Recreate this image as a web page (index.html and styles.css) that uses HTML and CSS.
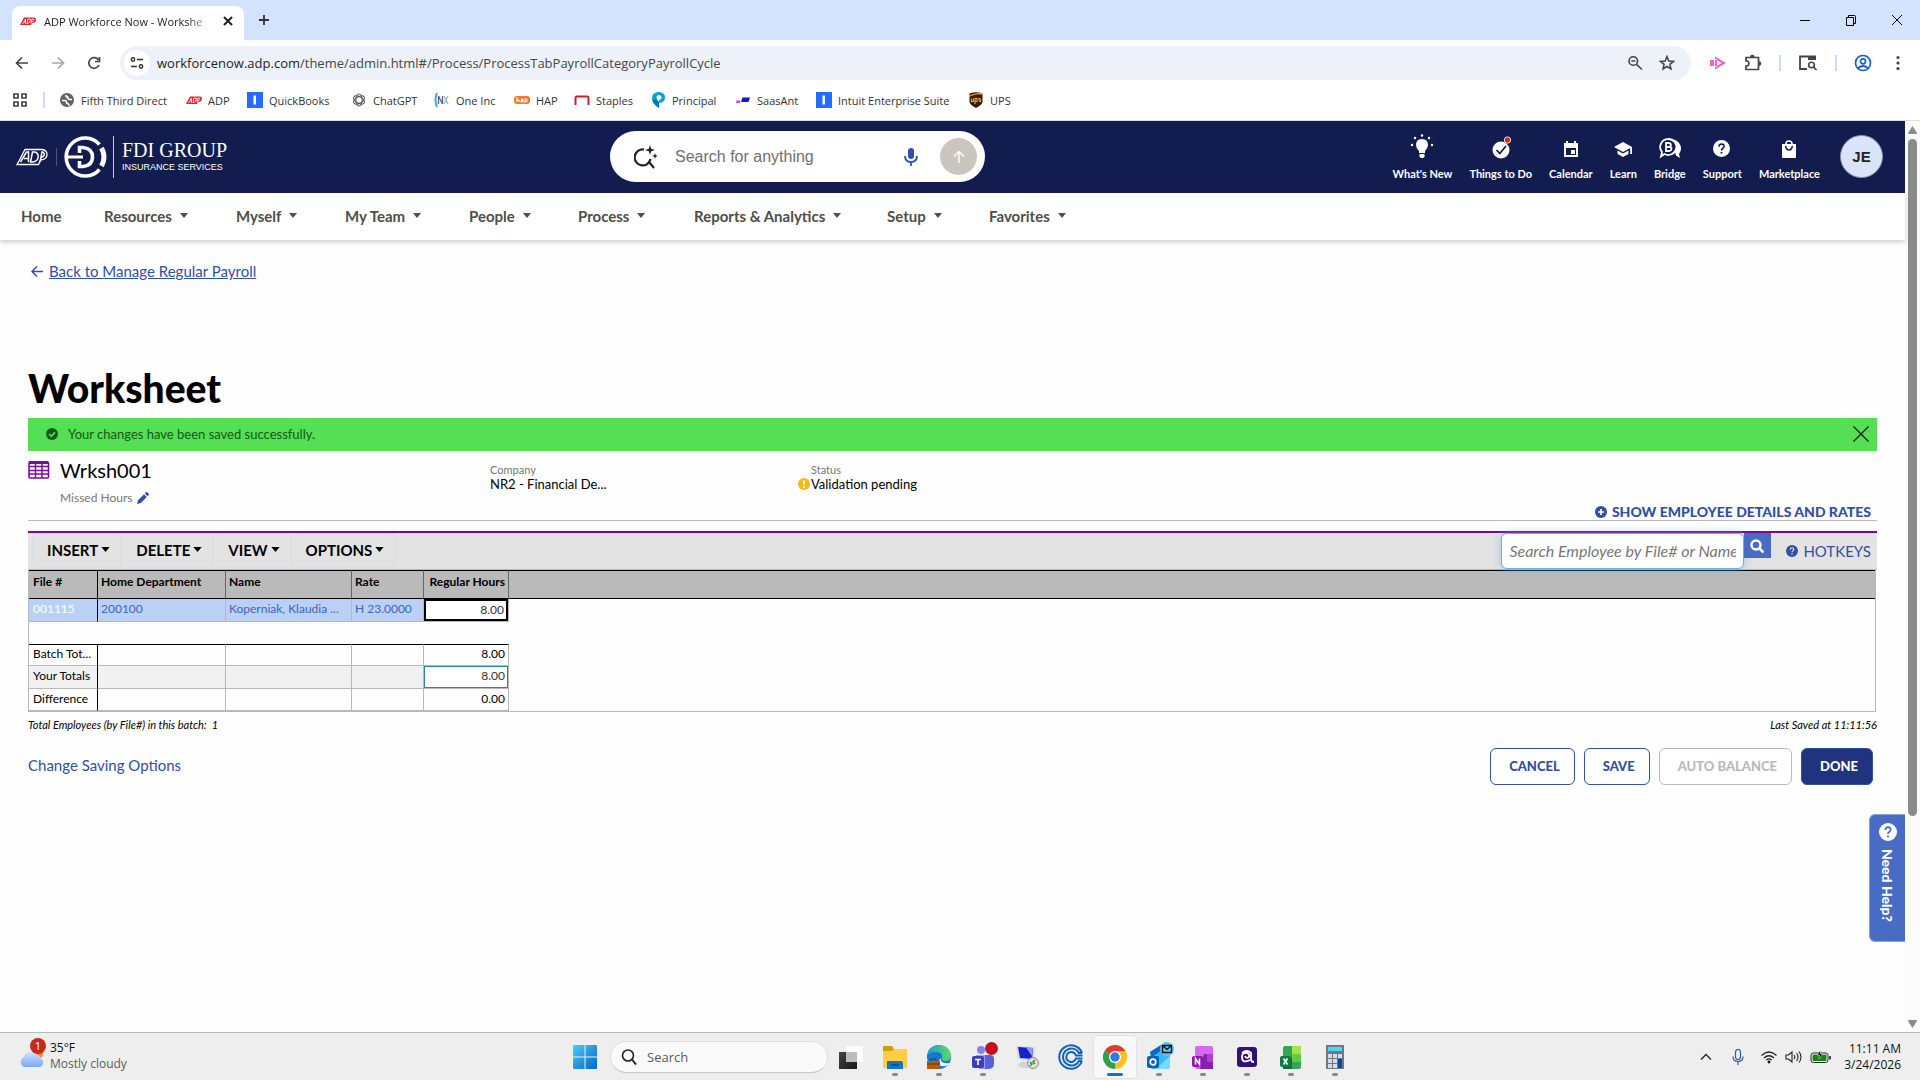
FILE: index.html
```html
<!DOCTYPE html>
<html lang="en">
<head>
<meta charset="utf-8">
<title>ADP Workforce Now - Worksheet</title>
<link rel="stylesheet" href="styles.css">
</head>
<body>
<svg class="defs" aria-hidden="true">
  <symbol id="adp-red" viewBox="0 0 16 16"><path d="M4 4.500h10.500q1.500.5 1.500 2.500 0 3-4 3l-1 2H0l1-2z" fill="#d9232e"/><path d="M2.500 11 5.500 6v5M4 9h1.500M7.800 6 7 10.500h1Q10.500 10 10.500 6H7.800M12 6l-1 4.500M12 6h1.500q1 1.500-.5 2.500h-1.200" fill="none" stroke="#fff" stroke-width=".8"/></symbol>
  <symbol id="intuit" viewBox="0 0 16 16"><path d="M0 0h16v16H0z" fill="#236cff"/><path d="M6.500 3.500h2.500v9H6.500z" fill="#fff"/></symbol>
  <symbol id="mic" viewBox="0 0 16 20"><rect x="5" y="1" width="6" height="11" rx="3" fill="currentColor"/><path d="M2 9q0 6 6 6t6-6M8 15v4" fill="none" stroke="currentColor" stroke-width="1.800"/></symbol>
  <symbol id="caret" viewBox="0 0 10 6"><path d="M0 0h10L5 6z" fill="currentColor"/></symbol>
  <symbol id="help" viewBox="0 0 18 18"><circle cx="9" cy="9" r="9" fill="currentColor"/><path d="M6.300 7q.2-2.800 2.800-2.800 2.600.1 2.600 2.400 0 1.200-1.300 2.100Q9 9.600 9 11" fill="none" stroke="var(--mark)" stroke-width="1.700"/><circle cx="9" cy="13.500" r="1.100" fill="var(--mark)"/></symbol>
</svg>

<header class="browser">
  <div class="tabstrip">
    <div class="tab">
      <svg width="16" height="16"><use href="#adp-red"/></svg>
      <span class="tab-title">ADP Workforce Now - Workshe</span>
      <button class="plain" aria-label="Close tab"><svg width="10" height="10" viewBox="0 0 10 10"><path d="M1 1l8 8M9 1 1 9" stroke="#202124" stroke-width="2"/></svg></button>
    </div>
    <button class="plain new-tab" aria-label="New tab"><svg width="12" height="12" viewBox="0 0 12 12"><path d="M6 1v10M1 6h10" stroke="#333" stroke-width="1.800"/></svg></button>
    <div class="window-buttons">
      <button class="plain" aria-label="Minimize"><svg width="12" height="12" viewBox="0 0 12 12"><path d="M1 6.500h10" stroke="#000"/></svg></button>
      <button class="plain" aria-label="Restore"><svg width="12" height="12" viewBox="0 0 12 12"><path d="M1.500 3.500h7v8h-7zM3.500 3V1.500h6q1 0 1 1v7H9" fill="none" stroke="#000"/></svg></button>
      <button class="plain" aria-label="Close"><svg width="12" height="12" viewBox="0 0 12 12"><path d="M1 1l10 10M11 1 1 11" stroke="#000"/></svg></button>
    </div>
  </div>
  <div class="addressbar">
    <div class="history">
      <button class="plain" aria-label="Back"><svg width="14" height="14" viewBox="0 0 14 14"><path d="M13 7H2M7 1.500 1.500 7 7 12.500" fill="none" stroke="#444" stroke-width="1.700"/></svg></button>
      <button class="plain" aria-label="Forward"><svg width="14" height="14" viewBox="0 0 14 14"><path d="M1 7h11M7 1.500 12.500 7 7 12.500" fill="none" stroke="#aaa" stroke-width="1.700"/></svg></button>
      <button class="plain" aria-label="Reload"><svg width="14" height="14" viewBox="0 0 14 14"><path d="M12 9A5.300 5.300 0 1 1 11.500 4M12.500 1v4.500H8" fill="none" stroke="#444" stroke-width="1.700"/></svg></button>
    </div>
    <div class="omnibox">
      <button class="plain site-info" aria-label="Site information"><svg width="14" height="14" viewBox="0 0 14 14"><path d="M7 3.500h6M1 10.500h6" stroke="#333" stroke-width="1.600"/><circle cx="3" cy="3.500" r="1.700" fill="none" stroke="#333" stroke-width="1.400"/><circle cx="11" cy="10.500" r="1.700" fill="none" stroke="#333" stroke-width="1.400"/></svg></button>
      <div class="url"><b>workforcenow.adp.com</b>/theme/admin.html#/Process/ProcessTabPayrollCategoryPayrollCycle</div>
      <button class="plain" aria-label="Zoom"><svg width="16" height="16" viewBox="0 0 16 16"><circle cx="6.300" cy="6" r="4.300" fill="none" stroke="#444" stroke-width="1.600"/><path d="M9.500 9.300 15 14.500M4.300 6h4" stroke="#444" stroke-width="1.600"/></svg></button>
      <button class="plain" aria-label="Bookmark"><svg width="16" height="16" viewBox="0 0 16 16"><path d="M8 1.500 9.800 6l4.700.4-3.600 3 1.100 4.600-4-2.500L4 14l1.100-4.600-3.600-3L6.200 6z" fill="none" stroke="#444" stroke-width="1.500"/></svg></button>
    </div>
    <div class="extensions">
      <svg width="18" height="16" viewBox="0 0 18 16"><path d="M1 5h4v6H1zM6 1.500 17 8 6 14.500z" fill="#ff5ec4"/><path d="M8 5v6l4.500-3zM6 4v1h1.500V4zM6 11v1h1.500v-1z" fill="#fff"/></svg>
      <svg width="18" height="18" viewBox="0 0 18 18"><path d="M2 3.500h12.500v12H2v-3.500h1q2-.5 2-2.500t-2-2.500H2z" fill="none" stroke="#444" stroke-width="1.700"/><path d="M6 3a2.300 2.300 0 0 1 4.600 0M15 7.200a2.300 2.300 0 0 1 0 4.600" fill="#444"/></svg>
      <i class="bar"></i>
      <svg width="20" height="18" viewBox="0 0 20 18"><path d="M9 15H2V2.500h15V6" fill="none" stroke="#444" stroke-width="1.800"/><path d="M10 2h8v4h-8z" fill="#444"/><circle cx="13.500" cy="11" r="2.800" fill="none" stroke="#444" stroke-width="1.600"/><path d="m15.500 13 3 3" stroke="#444" stroke-width="1.700"/></svg>
      <i class="bar"></i>
      <svg width="18" height="18" viewBox="0 0 18 18"><g fill="none" stroke="#1660d6" stroke-width="1.700"><circle cx="9" cy="9" r="7.500"/><circle cx="9" cy="7.300" r="2.500"/><path d="M4 14q5-4 10 0"/></g></svg>
      <svg width="18" height="18" viewBox="0 0 18 18"><g fill="#444"><circle cx="9" cy="3.500" r="1.600"/><circle cx="9" cy="9" r="1.600"/><circle cx="9" cy="14.500" r="1.600"/></g></svg>
    </div>
  </div>
  <nav class="bookmarks" aria-label="Bookmarks">
    <svg width="14" height="14" viewBox="0 0 14 14"><path d="M1 1h4v4H1zM9 1h4v4H9zM1 9h4v4H1zM9 9h4v4H9z" fill="none" stroke="#444" stroke-width="1.700"/></svg>
    <i class="bar"></i>
    <a href="#"><svg width="16" height="16" viewBox="0 0 16 16"><circle cx="8" cy="8" r="7" fill="#5f6368"/><path d="M3 8.500h3q1.500.2 1.500 1.700t1.500 1.500q1 .3 1 2M13 7.500h-2.500Q9 7.300 9 6T7.300 4.700L7 3" fill="none" stroke="#fff" stroke-width="1.700"/></svg>Fifth Third Direct</a>
    <a href="#"><svg width="16" height="16"><use href="#adp-red"/></svg>ADP</a>
    <a href="#"><svg width="16" height="16"><use href="#intuit"/></svg>QuickBooks</a>
    <a href="#"><svg width="16" height="16" viewBox="0 0 16 16"><g fill="none" stroke="#555" stroke-width="1.100"><ellipse cx="8" cy="8" rx="3.200" ry="6"/><ellipse cx="8" cy="8" rx="3.200" ry="6" transform="rotate(60 8 8)"/><ellipse cx="8" cy="8" rx="3.200" ry="6" transform="rotate(120 8 8)"/></g></svg>ChatGPT</a>
    <a href="#"><svg width="16" height="16" viewBox="0 0 16 16"><path d="M3 1Q0 8 3 15" fill="none" stroke="#49a3dc" stroke-width="2"/><path d="M4.500 12V4l4 8V4" fill="none" stroke="#52647c" stroke-width="1.300"/><path d="m10 4 4 8m0-8-4 8" stroke="#8db7d6" stroke-width="1.300"/></svg>One Inc</a>
    <a href="#"><svg width="16" height="16" viewBox="0 0 16 16"><rect y="4" width="16" height="8" rx="3" fill="#ef7c28"/><path d="M3 5v5m0-2h2v2M7 7h2v3H7V8.500h2M11 11V7h2v2.500h-2" fill="none" stroke="#fff"/></svg>HAP</a>
    <a href="#"><svg width="16" height="16" viewBox="0 0 16 16"><path d="M1.500 13V6q0-1.500 1.500-1.500h10q1.500 0 1.500 1.500v7" fill="none" stroke="#cc1f2f" stroke-width="2"/></svg>Staples</a>
    <a href="#"><svg width="16" height="16" viewBox="0 0 16 16"><path d="M9 0q6 .5 6 5.500T9 11V8q2.500-.3 2.500-2.500T9 3Q6.500 3 6.500 6 6.500 8.500 9 10v6Q2 11.500 2 6T9 0" fill="#0aa0d8"/><path d="M2.300 8Q3.500 12.500 9 16v-6Q7 9 6.600 7z" fill="#0076bd"/></svg>Principal</a>
    <a href="#"><svg width="16" height="16" viewBox="0 0 16 16"><path d="M7.500 5.500H15L13.500 10H6z" fill="#1616d2"/><path d="M1.500 8.500h4L5 11H1z" fill="#f13db2"/></svg>SaasAnt</a>
    <a href="#"><svg width="16" height="16"><use href="#intuit"/></svg>Intuit Enterprise Suite</a>
    <a href="#"><svg width="16" height="16" viewBox="0 0 16 16"><path d="M1.500 1.500Q8-1 14.500 1.500v8.500q-.5 3-6.500 6-6-3-6.500-6z" fill="#3a1c0c"/><path d="M2 4q6-3.500 12-2" fill="none" stroke="#f6a81c" stroke-width="1.300"/><path d="M3.500 6.500v3h2v-3M7 12V6.500h2v3H7M12.500 6.500H11V8h1.500v1.500H11" fill="none" stroke="#f6a81c" stroke-width="1.100"/></svg>UPS</a>
  </nav>
</header>

<div class="viewport">
  <div class="page">
    <header class="masthead">
      <div class="brand">
        <svg width="32" height="18" viewBox="0 0 32 18"><path d="M9 1.500h17q5 .5 5 5 0 5-6.500 5.500L22.500 16.500H1L3 13z" fill="none" stroke="#fff" stroke-width="1.300"/><path d="M4.500 14 10.500 4h2v10M8 10.500h4.500M16.500 4 14.500 14h2.300q5-.8 5.400-5 .2-4.500-3.700-5zM24 14l2-10h1q2.500 2 .3 4.500L25 9.500" fill="none" stroke="#fff" stroke-width="1.500"/></svg>
        <i class="brand-rule"></i>
        <svg width="44" height="44" viewBox="0 0 44 44"><path d="M35.500 9.500A19 19 0 1 0 35.500 34.500" fill="none" stroke="#fff" stroke-width="3.600"/><path d="M37.500 13q5 9 0 18" fill="none" stroke="#fff" stroke-width="5"/><path d="M4 22h15" fill="none" stroke="#fff" stroke-width="3"/><path d="M15.500 18v-5.500h3.500q9.500 1 9.500 9.500T19 31.500h-3.500V26" fill="none" stroke="#fff" stroke-width="3.600"/></svg>
        <div class="wordmark"><span class="wordmark-name">FDI GROUP</span><span class="wordmark-sub">INSURANCE SERVICES</span></div>
      </div>
      <form class="site-search">
        <svg width="24" height="26" viewBox="0 0 24 26"><path d="M10 5.500a8 8 0 1 0 6.500 9.500M15 18l5 6" fill="none" stroke="#222" stroke-width="2.200"/><path d="m16 1 1.200 3.800L21 6l-3.800 1.200L16 11l-1.200-3.800L11 6l3.800-1.200zM21 9l.8 2.200L24 12l-2.200.8L21 15l-.8-2.200L18 12l2.200-.8z" fill="#222"/></svg>
        <input type="text" placeholder="Search for anything" aria-label="Search for anything">
        <button class="plain voice" type="button" aria-label="Voice search"><svg width="16" height="20"><use href="#mic"/></svg></button>
        <button class="submit" type="button" aria-label="Search"><svg width="14" height="14" viewBox="0 0 14 14"><path d="M7 13V2M2 6.500 7 1.500l5 5" fill="none" stroke="#fff" stroke-width="1.400"/></svg></button>
      </form>
      <nav class="shortcuts" aria-label="Shortcuts">
        <a href="#"><svg width="24" height="26" viewBox="0 0 24 26"><path d="M12 5q6 0 6 6 0 3-3 6v2H9v-2q-3-3-3-6 0-6 6-6M9.500 20h5v3l-1.500 1h-2l-1.500-1z" fill="#fff"/><g fill="#fff"><circle cx="12" cy="1.500" r="1.200"/><circle cx="5" cy="4" r="1.200"/><circle cx="19" cy="4" r="1.200"/><circle cx="2" cy="11" r="1.200"/><circle cx="22" cy="11" r="1.200"/></g></svg>What's New</a>
        <a href="#"><svg width="20" height="24" viewBox="0 0 20 24"><circle cx="10" cy="14" r="8.500" fill="#fff"/><path d="m5.500 14 3.300 3.500L15 10" fill="none" stroke="#121c4e" stroke-width="1.800"/><circle cx="16.500" cy="4" r="3.200" fill="#cc2b1d" stroke="#fff" stroke-width=".8"/></svg>Things to Do</a>
        <a href="#"><svg width="18" height="20" viewBox="0 0 18 20"><path d="M2 3h2V1h2v2h6V1h2v2h2v14H2zm2 5v7h10V8zm5 2h4v4H9z" fill="#fff" fill-rule="evenodd"/></svg>Calendar</a>
        <a href="#"><svg width="20" height="20" viewBox="0 0 20 20"><path d="M10 2 19 7v7h-1.800V8L10 12 1 7zM4.500 10.500 10 13.500l5.500-3V14L10 17l-5.500-3z" fill="#fff"/></svg>Learn</a>
        <a href="#"><svg width="24" height="24" viewBox="0 0 24 24"><path d="M13 3.500a9 9 0 0 1 8 14.500l1 4-4-2.500" fill="#fff"/><path d="M10 3a8 8 0 1 1-3.500 15L3 20.500 4 16A8 8 0 0 1 10 3" fill="#121c4e" stroke="#fff" stroke-width="1.800"/><path d="M8 7v8h3.500q2-.5 2-2.200T11.500 11H8h3q2-.4 2-2t-2-2z" fill="none" stroke="#fff" stroke-width="1.800"/></svg>Bridge</a>
        <a href="#"><svg class="on-navy" width="18" height="20" viewBox="0 0 18 20"><use href="#help" width="17" height="17"/></svg>Support</a>
        <a href="#"><svg width="18" height="20" viewBox="0 0 18 20"><path d="M2 4h14v13q0 1-1 1H3q-1 0-1-1z" fill="#fff"/><path d="M6 6V4q0-3 3-3t3 3v2" fill="none" stroke="#fff" stroke-width="1.700"/><path d="M5.500 6q1 4 3.500 4t3.500-4" fill="none" stroke="#121c4e" stroke-width="1.500"/></svg>Marketplace</a>
      </nav>
      <button class="avatar">JE</button>
    </header>
    <nav class="mainmenu" aria-label="Main">
      <a href="#">Home</a>
      <a href="#">Resources <svg width="8" height="5"><use href="#caret"/></svg></a>
      <a href="#">Myself <svg width="8" height="5"><use href="#caret"/></svg></a>
      <a href="#">My Team <svg width="8" height="5"><use href="#caret"/></svg></a>
      <a href="#">People <svg width="8" height="5"><use href="#caret"/></svg></a>
      <a href="#">Process <svg width="8" height="5"><use href="#caret"/></svg></a>
      <a href="#">Reports &amp; Analytics <svg width="8" height="5"><use href="#caret"/></svg></a>
      <a href="#">Setup <svg width="8" height="5"><use href="#caret"/></svg></a>
      <a href="#">Favorites <svg width="8" height="5"><use href="#caret"/></svg></a>
    </nav>

    <main class="content">
      <div class="back"><svg width="12" height="12" viewBox="0 0 12 12"><path d="M12 6.500H1.500M6 1.500l-5 5 5 5" fill="none" stroke="#324fa3" stroke-width="1.500"/></svg><a href="#">Back to Manage Regular Payroll</a></div>
      <h1>Worksheet</h1>
      <div class="notice" role="status">
        <svg width="12" height="12" viewBox="0 0 12 12"><circle cx="6" cy="6" r="6" fill="#14591a"/><path d="m3 6 2.300 2.300L9 4.300" fill="none" stroke="#54df54" stroke-width="1.700"/></svg>
        <span>Your changes have been saved successfully.</span>
        <button class="plain" aria-label="Dismiss"><svg width="16" height="16" viewBox="0 0 16 16"><path d="m.5.500 15 15M15.500.500l-15 15" stroke="#111" stroke-width="1.200"/></svg></button>
      </div>
      <section class="summary">
        <svg class="sheet-icon" width="22" height="18" viewBox="0 0 22 18"><rect x="1" y="1" width="19.500" height="16" rx="1" fill="none" stroke="#7d0ba0" stroke-width="1.600"/><path d="M1 5.500h20M1 9.500h20M1 13h20M7.500 2v15M14 2v15" fill="none" stroke="#7d0ba0" stroke-width="1.500"/><path d="M1 0h19v3H1z" fill="#7d0ba0"/></svg>
        <div class="sheet-name"><h2>Wrksh001</h2><p>Missed Hours <svg width="12" height="12" viewBox="0 0 12 12"><path d="M0 12 1 8.200 7 2.200 9.800 5l-6 6zM7.800 1.500 9 .300q.6-.5 1.200 0L11.700 1.800q.5.600 0 1.200l-1.200 1.200z" fill="#2d4fae"/></svg></p></div>
        <div class="fact"><small>Company</small><span>NR2 - Financial De...</span></div>
        <div class="fact status"><small>Status</small><span><svg width="12" height="12" viewBox="0 0 12 12"><circle cx="6" cy="6" r="6" fill="#ffb80a"/><path d="M6 2.300v4.500M6 8v2" stroke="#fff" stroke-width="1.800"/></svg>Validation pending</span></div>
        <button class="plain details"><svg width="12" height="12" viewBox="0 0 12 12"><circle cx="6" cy="6" r="6" fill="#324fa3"/><path d="M6 3v6M3 6h6" stroke="#fff" stroke-width="1.700"/></svg>SHOW EMPLOYEE DETAILS AND RATES</button>
      </section>
      <div class="toolbar">
        <button>INSERT <svg width="9" height="5"><use href="#caret"/></svg></button>
        <button>DELETE <svg width="9" height="5"><use href="#caret"/></svg></button>
        <button>VIEW <svg width="9" height="5"><use href="#caret"/></svg></button>
        <button>OPTIONS <svg width="9" height="5"><use href="#caret"/></svg></button>
        <input type="text" placeholder="Search Employee by File# or Name" aria-label="Search Employee by File# or Name">
        <button class="find" aria-label="Find"><svg width="14" height="14" viewBox="0 0 14 14"><circle cx="6" cy="6" r="4.500" fill="none" stroke="#fff" stroke-width="2.400"/><path d="m9.500 9.500 4 4" stroke="#fff" stroke-width="2.600"/></svg></button>
        <a href="#"><svg class="on-grey" width="12" height="12" viewBox="0 0 18 18"><use href="#help"/></svg>HOTKEYS</a>
      </div>
      <div class="gridbox">
        <table>
          <colgroup><col class="c-file"><col class="c-dept"><col class="c-name"><col class="c-rate"><col class="c-hours"><col></colgroup>
          <thead><tr><th>File #</th><th>Home Department</th><th>Name</th><th>Rate</th><th class="num">Regular Hours</th><th></th></tr></thead>
          <tbody>
            <tr class="entry"><td>001115</td><td>200100</td><td>Koperniak, Klaudia ...</td><td>H 23.0000</td><td class="cell"><input class="active" value="8.00" aria-label="Regular hours"></td><td></td></tr>
            <tr class="spacer"><td colspan="6"></td></tr>
          </tbody>
          <tfoot>
            <tr class="first"><td>Batch Tot...</td><td></td><td></td><td></td><td class="num">8.00</td><td></td></tr>
            <tr class="yours"><td>Your Totals</td><td></td><td></td><td></td><td class="cell"><input value="8.00" aria-label="Your total regular hours"></td><td></td></tr>
            <tr><td>Difference</td><td></td><td></td><td></td><td class="num">0.00</td><td></td></tr>
          </tfoot>
        </table>
      </div>
      <div class="footnotes"><span>Total Employees (by File#) in this batch: &nbsp;1</span><span>Last Saved at 11:11:56</span></div>
      <div class="actions">
        <a href="#">Change Saving Options</a>
        <button>CANCEL</button><button>SAVE</button><button disabled>AUTO BALANCE</button><button class="primary">DONE</button>
      </div>
    </main>
    <button class="needhelp"><svg class="on-blue" width="18" height="18"><use href="#help"/></svg>Need Help?</button>
  </div>
  <div class="scrollbar">
    <svg width="9" height="8" viewBox="0 0 9 8"><path d="M4.500 0 9 7q0 1-1 1H1Q0 8 0 7z" fill="#8b8b8b"/></svg>
    <i class="thumb"></i>
    <svg width="9" height="8" viewBox="0 0 9 8"><path d="M4.500 8 9 1q0-1-1-1H1Q0 0 0 1z" fill="#8b8b8b"/></svg>
  </div>
</div>

<footer class="taskbar">
  <div class="weather">
    <svg width="30" height="34" viewBox="0 0 30 34"><defs><linearGradient id="cloud" x2="0" y2="1"><stop stop-color="#d5e5ff"/><stop offset="1" stop-color="#7ba7ee"/></linearGradient></defs><circle cx="20" cy="16" r="5" fill="#f58a1f"/><path d="M6 29a5.500 5.500 0 0 1 0-10 7 7 0 0 1 13-2q4 0 4 4 3 1 2 5-1 3-4 3z" fill="url(#cloud)"/><circle cx="20" cy="8" r="8" fill="#c42b1c"/><text x="20" y="12" text-anchor="middle" class="badge">1</text></svg>
    <div><p>35°F</p><p class="muted">Mostly cloudy</p></div>
  </div>
  <div class="apps">
    <button class="plain start" aria-label="Start"><svg width="24" height="24" viewBox="0 0 24 24"><defs><linearGradient id="win" x2="1" y2="1"><stop stop-color="#4cc9fb"/><stop offset="1" stop-color="#0068c8"/></linearGradient></defs><path d="M1 0h10.500v11.500H0V1q0-1 1-1M12.500 0H23q1 0 1 1v10.500H12.500zM0 12.500h11.500V24H1q-1 0-1-1zM12.500 12.500H24V23q0 1-1 1H12.500z" fill="url(#win)"/></svg></button>
    <label class="desk-search"><svg width="16" height="16" viewBox="0 0 16 16"><circle cx="7" cy="6.500" r="5.500" fill="none" stroke="#222" stroke-width="1.600"/><path d="m11 10.500 4 5" stroke="#222" stroke-width="2"/></svg><input type="text" placeholder="Search" aria-label="Search"></label>
    <button class="app" aria-label="Task view"><svg width="24" height="24" viewBox="0 0 24 24"><defs><linearGradient id="tv" x2="1" y2="1"><stop stop-color="#444"/><stop offset="1" stop-color="#181818"/></linearGradient></defs><path d="M0 7h18v17H0z" fill="url(#tv)"/><path d="M7 1h17v16H7z" fill="#fcfcfc"/><path d="M7 7h11v10H7z" fill="#bdbdbd"/></svg></button>
    <button class="app open" aria-label="File Explorer"><svg width="24" height="24" viewBox="0 0 24 24"><path d="M0 2q0-1 1-1h8l2 3v3H0z" fill="#d99a0b"/><path d="M0 6h9l2-2h12q1 0 1 1v18H0z" fill="#ffce45"/><path d="M4 17q0-1 1-1h13q2 0 2 2v6H4z" fill="#1277c5"/><path d="M8 19h8v2H8z" fill="#0b5594"/></svg></button>
    <button class="app open" aria-label="Edge"><svg width="24" height="24" viewBox="0 0 24 24"><defs><linearGradient id="edge" x2="1"><stop stop-color="#1698e0"/><stop offset="1" stop-color="#61dc5b"/></linearGradient></defs><circle cx="12" cy="12" r="12" fill="#1279cf"/><path d="M0 11Q2 0 12 0t12 10q0 6-6 6-4 0-3-3 1-6-6-6Q2 7 0 12" fill="url(#edge)"/><path d="M14 13q-2 6 9 5-3 4-9 3-5-3 0-8" fill="#eee"/><path d="M0 16h13v8H0z" fill="#b05d13"/><path d="M4 16v-2h5v2M0 19h13" fill="none" stroke="#6b3008"/></svg></button>
    <button class="app open" aria-label="Teams"><svg width="30" height="30" viewBox="0 0 30 30"><circle cx="13" cy="8" r="4" fill="#7f86ee"/><path d="M8 13h14q4 0 4 4v5q0 5-6 5h-7q-5-1-5-6z" fill="#5861dc"/><path d="M8 13h9v14q-9 0-9-6z" fill="#989df5"/><rect x="4" y="14" width="12" height="12" rx="2" fill="#3c3fb5"/><path d="M7 17.500h6M10 17.500V23" stroke="#fff" stroke-width="1.600"/><circle cx="23.500" cy="6.500" r="6.500" fill="#c50f1f"/></svg></button>
    <button class="app" aria-label="Remote Desktop"><svg width="24" height="24" viewBox="0 0 24 24"><path d="m1 1 19 1-1 14L3 14z" fill="#d5dae4"/><path d="m3 2 15 1-1 11-12-1z" fill="#1623c9"/><path d="m11 2.500 7 .5-1 8z" fill="#8b9df0"/><path d="M2 20l6-4 8 2-2 5q-8 1-12-3" fill="#d4d5d7"/><circle cx="18" cy="18" r="5.500" fill="#dfe1df" stroke="#888"/><path d="m15 17 2 2-2 2m5-6-2 2 2 2" stroke="#279328" fill="none" stroke-width="1.500"/></svg></button>
    <button class="app" aria-label="Connect"><svg width="26" height="26" viewBox="0 0 26 26"><g fill="none" stroke="#1263b3"><path d="M24 9A11.700 11.700 0 1 0 24 17" stroke-width="2"/><path d="M24 9h-3A8.500 8.500 0 1 0 21 17h3" stroke-width="1.900"/><path d="M24.500 11.500H18A5 5 0 1 0 18 14.500h6.500" stroke-width="2"/></g></svg></button>
    <button class="app open current" aria-label="Chrome"><svg width="24" height="24" viewBox="0 0 24 24"><path d="M12 12 1.600 6A12 12 0 0 1 22.400 6z" fill="#e33b2e"/><path d="M12 12 22.400 6A12 12 0 0 1 12 24z" fill="#fbc116"/><path d="M12 12v12A12 12 0 0 1 1.600 6z" fill="#2ba24c"/><path d="M12 6h10.400q3 6-1 12L14 20l-3 4 6-9z" fill="#fbc116"/><circle cx="12" cy="12" r="6" fill="#fff"/><circle cx="12" cy="12" r="4.700" fill="#3478e5"/></svg></button>
    <button class="app open" aria-label="Outlook"><svg width="30" height="30" viewBox="0 0 30 30"><path d="M6 10 17 3l9 7v14q0 3-3 3H9q-3 0-3-3z" fill="#37b7f5"/><path d="m6 10 11-7 4 3-13 9z" fill="#1764be"/><path d="M12 27 26 14v10q0 3-3 3z" fill="#75dcff"/><rect x="3" y="14" width="12" height="12" rx="2" fill="#0f5fbd"/><circle cx="9" cy="20" r="2.800" fill="none" stroke="#fff" stroke-width="1.700"/><circle cx="23" cy="7" r="7" fill="#5bc6fa"/><path d="M18.500 3.500h9v7h-9zl4.500 4 4.500-4" fill="none" stroke="#111" stroke-width="1.300"/></svg></button>
    <button class="app open" aria-label="OneNote"><svg width="24" height="24" viewBox="0 0 24 24"><rect x="4" y="1" width="18" height="23" rx="2" fill="#d569f2"/><path d="M13 9h9v15H9z" fill="#8620ae"/><path d="M16 9h6v8h-6z" fill="#b53cd4"/><rect x="1" y="11" width="11" height="11" rx="2" fill="#8a1bae"/><path d="M4.500 19.500v-6l4 6v-6" fill="none" stroke="#fff" stroke-width="1.500"/></svg></button>
    <button class="app open" aria-label="Q app"><svg width="24" height="24" viewBox="0 0 24 24"><rect x="2" y="2" width="20" height="20" rx="3" fill="#321174"/><path d="M7 8q5-4 9 0v6q0 3 3 3M15 15q-8 4-8-3 0-5 5-4 3 1 2 4-3 2-4-1" fill="none" stroke="#fff" stroke-width="1.800"/></svg></button>
    <button class="app open" aria-label="Excel"><svg width="24" height="24" viewBox="0 0 24 24"><rect x="4" y="1" width="18" height="23" rx="2" fill="#33a852"/><path d="M13 1h9v8h-9z" fill="#a0e64b"/><path d="M13 9h9v8h-9z" fill="#64c94a"/><path d="M4 13h9v11H4z" fill="#176b38"/><rect x="1" y="11" width="11" height="11" rx="2" fill="#127a40"/><path d="m4.500 13.500 4 6m0-6-4 6" stroke="#fff" stroke-width="1.600"/></svg></button>
    <button class="app open" aria-label="Calculator"><svg width="24" height="24" viewBox="0 0 24 24"><path d="M3 0h18v24H3z" fill="#6a7887"/><path d="M5 2h14v4H5z" fill="#50d5fa"/><path d="M5 9h4v4H5zM10 9h4v4h-4zM15 9h4v4h-4zM5 14h4v4H5zM10 14h4v4h-4zM5 19h4v4H5zM10 19h4v4h-4z" fill="#d5dce4"/><path d="M15 14h4v9h-4z" fill="#0d4990"/></svg></button>
  </div>
  <div class="tray">
    <svg width="12" height="12" viewBox="0 0 12 12"><path d="M1 8.500 6 3.500l5 5" fill="none" stroke="#222" stroke-width="1.300"/></svg>
    <svg class="tray-mic" width="12" height="16" viewBox="0 0 12 16"><rect x="3.500" y=".5" width="5" height="10" rx="2.500" fill="none" stroke="#2b5fa8" stroke-width="1.200"/><path d="M1 7.500q0 5 5 5t5-5M6 12.500V16" fill="none" stroke="#2b5fa8" stroke-width="1.200"/></svg>
    <svg width="16" height="14" viewBox="0 0 16 14"><path d="M.5 5.500q7.500-7 15 0M3 8q5-4.500 10 0M5.300 10q2.700-2.300 5.400 0" fill="none" stroke="#222" stroke-width="1.200"/><circle cx="8" cy="12" r="1.400" fill="#111"/></svg>
    <svg width="17" height="14" viewBox="0 0 17 14"><path d="M1 5h2.500L7 2v10L3.500 9H1zM9 5q1.500 2 0 4M11.500 3q3 4 0 8M14 1.500q4 5.500 0 11" fill="none" stroke="#222" stroke-width="1.100"/></svg>
    <svg width="21" height="14" viewBox="0 0 21 14"><rect x="1" y="3" width="17" height="9.500" rx="2.500" fill="#fff" stroke="#222"/><rect x="2.500" y="4.500" width="14" height="6.500" rx="1" fill="#12880f"/><path d="M20 6v3.500" stroke="#222" stroke-width="1.600"/><path d="M10.500 0 7 5h2.500l-.5 4 4-5h-2.500z" fill="#111" stroke="#fff" stroke-width=".5"/></svg>
    <div class="clock"><p>11:11 AM</p><p>3/24/2026</p></div>
  </div>
</footer>
</body>
</html>
```
FILE: styles.css
```css
* { box-sizing: border-box; margin: 0; padding: 0; }
body { display: flex; flex-direction: column; height: 100vh; overflow: hidden; font-family: Lato, "Liberation Sans", sans-serif; font-size: 15px; color: #000; background: #fefefe; }
a { color: #324fa3; text-decoration: none; }
button, input { font: inherit; }
svg { flex: none; }
.defs { position: absolute; width: 0; height: 0; }
.plain { display: flex; align-items: center; border: 0; background: none; }
.bar { width: 2px; height: 16px; background: #c7dcfc; }
.on-navy { --mark: #121c4e; }
.on-grey { --mark: #e3e3e3; }
.on-blue { --mark: #486bc4; }

/* Browser frame */
.browser { flex: none; font-family: "Open Sans", "Noto Sans", sans-serif; font-size: 11px; color: #333; border-bottom: 1px solid #dcdcdc; }
.tabstrip { display: flex; align-items: center; height: 40px; padding-left: 12px; background: #d3e3fd; }
.tab { display: flex; align-items: center; gap: 8px; align-self: flex-end; width: 232px; height: 34px; padding: 0 11px 4px 8px; border-radius: 8px 8px 0 0; background: #fff; color: #1f1f1f; }
.tab-title { flex: 1; white-space: nowrap; -webkit-mask-image: linear-gradient(90deg, #000 84%, transparent); mask-image: linear-gradient(90deg, #000 84%, transparent); }
.new-tab { margin-left: 14px; }
.window-buttons { display: flex; gap: 34px; margin-left: auto; padding-right: 17px; }
.addressbar { display: flex; align-items: center; height: 46px; background: #fff; }
.history { display: flex; justify-content: space-between; width: 120px; padding: 0 19px 0 15px; }
.omnibox { display: flex; align-items: center; gap: 16px; flex: 1; height: 34px; padding: 0 16px 0 4px; border-radius: 17px; background: #edf1fa; }
.site-info { justify-content: center; width: 26px; height: 26px; border-radius: 13px; background: #fff; }
.url { flex: 1; margin-left: -9px; font-size: 13px; color: #474747; }
.url b { font-weight: 400; color: #1f1f1f; }
.extensions { display: flex; align-items: center; justify-content: space-between; width: 229px; padding: 0 13px 0 18px; }
.bookmarks { display: grid; grid-template-columns: 30px 16px 127px 61px 104px 83px 80px 60px 76px 85px 81px 152px auto; align-items: center; height: 34px; padding: 0 0 6px 13px; background: #fff; }
.bookmarks a { display: flex; align-items: center; gap: 6px; color: #333; white-space: nowrap; }

/* Application header */
.viewport { flex: 1; display: flex; min-height: 0; }
.page { position: relative; flex: 1; min-width: 0; }
.masthead { display: flex; align-items: center; height: 72px; padding: 0 22px 1px 16px; background: #121c4e; }
.brand { display: flex; align-items: center; flex: none; width: 594px; }
.brand-rule { width: 1px; height: 18px; margin: 0 7px 0 8px; background: #4d5680; }
.wordmark { display: flex; flex-direction: column; gap: 1px; height: 42px; justify-content: center; margin-left: 5px; padding-left: 8px; border-left: 1px solid #c9ccdb; color: #fff; }
.wordmark-name { font: 20px/20px "Liberation Serif", serif; }
.wordmark-sub { font: 9px/12px "Liberation Sans", sans-serif; }
.site-search { display: flex; align-items: center; width: 375px; height: 51px; padding: 0 8px 0 24px; border-radius: 26px; background: #fff; }
.site-search input { flex: 1; min-width: 0; margin-left: 17px; border: 0; outline: 0; background: none; font: 16px "Liberation Sans", sans-serif; }
.site-search input::placeholder { color: #70706f; }
.voice { color: #324fae; margin-right: 21px; }
.submit { display: flex; align-items: center; justify-content: center; width: 37px; height: 37px; border: 0; border-radius: 50%; background: #cbc5c0; }
.shortcuts { flex: 1 1 0; display: flex; justify-content: flex-end; gap: 17px; height: 48px; margin-right: 20px; }
.shortcuts a { display: flex; flex-direction: column; align-items: center; justify-content: flex-end; gap: 8px; padding-bottom: 1px; font-size: 11px; font-weight: 700; line-height: 12px; color: #fff; white-space: nowrap; }
.avatar { width: 43px; height: 43px; border: 1px solid #8c93ac; border-radius: 50%; background: #d9e4f8; font: 700 15px "Liberation Sans", sans-serif; color: #222; }
.mainmenu { display: grid; grid-template-columns: 83px 132px 109px 124px 109px 116px 193px 102px auto; align-items: center; height: 47px; padding: 0 0 2px 21px; background: #fff; box-shadow: 0 2px 5px rgba(0, 0, 0, .2); }
.mainmenu a { display: flex; align-items: center; gap: 8px; font-weight: 700; color: #504d4a; white-space: nowrap; }

/* Worksheet */
.content { padding: 21px 28px 0; }
.back { display: flex; align-items: center; gap: 6px; padding-left: 3px; line-height: 20px; }
.back a { text-decoration: underline; }
h1 { margin-top: 83px; font-size: 39px; font-weight: 900; line-height: 48px; }
.notice { display: flex; align-items: center; gap: 10px; height: 33px; margin-top: 6px; padding: 0 8px 1px 18px; background: #54df54; color: #14591a; font-size: 13px; }
.notice span { flex: 1; }
.summary { display: grid; grid-template-columns: 32px 430px 308px 1fr auto; height: 70px; padding-top: 8px; border-bottom: 1px solid #b8b8b8; }
.sheet-icon { margin-top: 2px; }
h2 { font-size: 20px; font-weight: 400; line-height: 22px; }
.sheet-name p { display: flex; gap: 5px; align-items: center; margin-top: 8px; font-size: 12px; line-height: 18px; color: #777; }
.fact { display: flex; flex-direction: column; padding-top: 4px; font-size: 13px; line-height: 16px; }
.fact small { font-size: 11px; line-height: 13px; color: #777; }
.fact span { display: flex; align-items: center; }
.status small { padding-left: 13px; }
.status span { gap: 1px; }
.details { align-self: end; gap: 5px; margin-right: 6px; font-size: 14px; font-weight: 900; line-height: 16px; color: #324fa3; }
.toolbar { display: flex; height: 39px; margin-top: 10px; padding: 0 6px 0 4px; border-top: 2px solid #8000a0; border-bottom: 1px solid #b8b8b8; background: #e3e3e3; }
.toolbar button { display: flex; align-items: center; gap: 3px; height: 34px; padding: 0 10px 1px 14px; border: 1px solid #d7e0e3; background: none; font-weight: 700; }
.toolbar input { width: 243px; height: 36px; margin-left: auto; padding: 0 7px 1px; border: 1px solid #66afe9; border-radius: 6px; outline: 0; background: #fff; box-shadow: 0 0 8px rgba(102, 175, 233, .6); font-size: 16px; font-style: italic; }
.toolbar input::placeholder { color: #777; }
.toolbar .find { width: 27px; height: 25px; padding: 0 6px; border: 0; background: #486bc4; }
.toolbar a { display: flex; align-items: center; gap: 5px; margin-left: 15px; }
.toolbar a svg { color: #324fa3; }
.gridbox { margin-right: 1px; border: 1px solid #b8b8b8; border-top: 0; }
table { width: 100%; table-layout: fixed; border-collapse: separate; border-spacing: 0; font-size: 12px; }
.c-file { width: 69px; } .c-dept { width: 128px; } .c-name { width: 126px; } .c-rate { width: 72px; } .c-hours { width: 85px; }
th { height: 29px; padding: 0 3px 6px; border: solid #000; border-width: 1px 0; border-right: 1px solid #666; background: #bababa; text-align: left; font-weight: 700; white-space: nowrap; }
th:first-child, tr:not(.spacer) td:first-child { padding-left: 4px; border-right: 1px solid #000; }
th.num, td.num { text-align: right; }
th:last-child { border-right: 0; }
td { height: 22px; padding: 0 3px 3px; border-right: 1px solid #b8b8b8; border-bottom: 1px solid #b8b8b8; white-space: nowrap; }
td:last-child { border: 0; }
.entry td { height: 23px; color: #4064bd; }
.entry td:not(.cell):not(:last-child) { background: #bad0f5; }
.entry td:first-child { color: #fff; }
td.cell { padding: 0; }
td input { display: block; width: 100%; height: 22px; padding: 0 2px 3px; border: 1px solid #2786a0; outline: 0; text-align: right; color: #333; background: #fff; }
td input.active { border: 2px solid #000; padding: 0 2px 2px; }
.spacer td { border: 0; }
.first td:not(:last-child) { border-top: 1px solid #000; }
.yours td { height: 23px; }
.yours td:not(:last-child) { background: #f1f1f1; }
.footnotes { display: flex; justify-content: space-between; padding-top: 5px; font-size: 11px; font-style: italic; line-height: 16px; }
.actions { display: flex; align-items: center; gap: 9px; margin-top: 15px; padding-right: 4px; }
.actions a { margin-right: auto; padding-bottom: 4px; }
.actions button { height: 37px; padding: 0 14px 1px 18px; border: 1px solid #324fa3; border-radius: 6px; background: #fff; color: #324fa3; font-size: 13px; font-weight: 900; }
.actions button:disabled { border-color: #bababa; color: #bababa; }
.actions .primary { background: #20337f; color: #fff; }
.needhelp { position: absolute; right: 0; top: 693px; display: flex; align-items: center; gap: 8px; width: 36px; height: 128px; padding: 8px 0; border: 1px solid #88a0dc; border-right: 0; border-radius: 6px 0 0 6px; background: #486bc4; color: #fff; font-size: 14px; font-weight: 900; writing-mode: vertical-rl; }
.scrollbar { display: flex; flex-direction: column; align-items: center; width: 15px; padding: 5px 0 4px; background: #fbfbfb; }
.thumb { width: 9px; height: 75%; margin: 5px 0 auto; border-radius: 5px; background: #8b8b8b; }

/* Desktop taskbar */
.taskbar { flex: none; display: flex; height: 48px; border-top: 1px solid #b9b9b9; background: #eee; font-family: "Open Sans", "Noto Sans", sans-serif; font-size: 12px; line-height: 16px; color: #111; }
.weather { flex: none; display: flex; gap: 2px; width: 573px; padding: 5px 0 0 18px; }
.weather div { padding-top: 2px; }
.muted { color: #5c5c5c; }
.badge { font-size: 11px; fill: #fff; }
.apps { display: flex; align-items: center; flex: none; }
.start { margin-right: 13px; }
.desk-search { display: flex; align-items: center; gap: 10px; width: 218px; height: 32px; margin-right: 1px; padding: 0 10px; border: 1px solid #dedede; border-bottom-color: #c6c6c6; border-radius: 16px; background: #fafafa; }
.desk-search input { width: 120px; border: 0; outline: 0; background: none; font-size: 13px; }
.desk-search input::placeholder { color: #5c5c5c; }
.app { position: relative; display: flex; align-items: center; justify-content: center; width: 44px; height: 44px; border: 1px solid transparent; border-radius: 4px; background: none; }
.open::after { content: ""; position: absolute; left: 50%; bottom: 2px; width: 6px; height: 3px; margin-left: -3px; border-radius: 2px; background: #888; }
.current { background: #f8f8f8; border-color: #e3e3e3; }
.current::after { width: 16px; margin-left: -8px; background: #0078d4; }
.tray { flex: 1 1 0; display: flex; align-items: center; justify-content: flex-end; gap: 8px; padding-right: 19px; }
.tray-mic { margin: 0 9px 0 12px; }
.clock { width: 62px; text-align: right; }
```
